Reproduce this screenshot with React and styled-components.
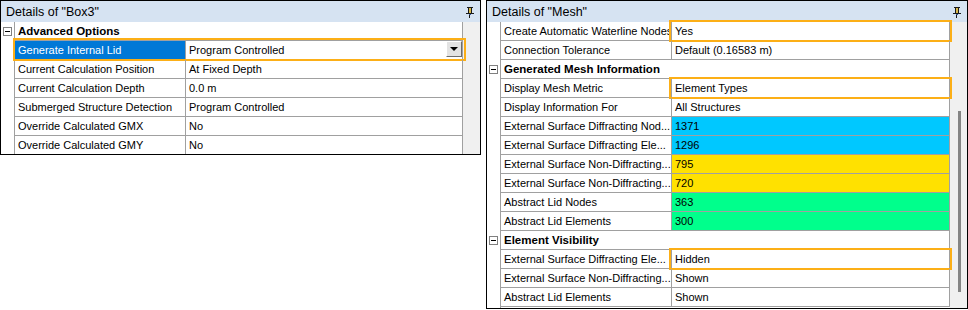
import React from 'react';
import styled, { createGlobalStyle } from 'styled-components';

const GlobalStyle = createGlobalStyle`
  body {
    margin: 0;
    background: #fff;
    font-family: "Liberation Sans", Arial, sans-serif;
    color: #000;
  }
`;

const FILLS = {
  blue: '#00c8ff',
  yellow: '#ffe100',
  green: '#00ff8c',
};

const ORANGE = '#fcaf17';

const Page = styled.div`
  display: flex;
  align-items: flex-start;
  gap: 5px;
`;

const Panel = styled.div`
  width: ${p => p.$w}px;
  height: ${p => p.$h}px;
  box-sizing: border-box;
  border: 1px solid #000;
  display: flex;
  flex-direction: column;
  overflow: hidden;
  background: #fff;
`;

const Header = styled.div`
  flex: none;
  height: 21px;
  box-sizing: border-box;
  padding: 1px 6px 0 5px;
  background: #d6e3f2;
  display: flex;
  align-items: center;
  justify-content: space-between;
  font-size: 12.5px;
`;

const Body = styled.div`
  flex: 1;
  min-height: 0;
  display: flex;
`;

const Rows = styled.div`
  flex: 1;
  display: flex;
  flex-direction: column;
`;

const Row = styled.div`
  flex: none;
  height: 19px;
  display: flex;
`;

const Filler = styled.div`
  flex: 1;
  display: flex;
`;

const Gutter = styled.div`
  flex: none;
  width: 14px;
  box-sizing: border-box;
  border-right: 1px solid #a0a0a0;
  display: flex;
  align-items: center;
  justify-content: center;
`;

const Minus = styled.div`
  width: 9px;
  height: 9px;
  box-sizing: border-box;
  border: 1px solid #808080;
  background: #fff;
  display: flex;
  align-items: center;
  justify-content: center;
  &::before {
    content: '';
    width: 5px;
    height: 1px;
    background: #000;
  }
`;

const Cells = styled.div`
  flex: none;
  display: flex;
  position: relative;
  height: 19px;
  box-sizing: border-box;
  border-bottom: 1px solid #a0a0a0;
  ${p => p.$box && `
    &::after {
      content: '';
      position: absolute;
      left: -2px;
      right: -3px;
      top: -3px;
      bottom: -2px;
      border: 2px solid ${ORANGE};
      pointer-events: none;
    }
  `}
`;

const cellText = `
  box-sizing: border-box;
  height: 18px;
  line-height: 18px;
  font-size: 11px;
  padding-left: 3px;
  white-space: nowrap;
  overflow: hidden;
  border-right: 1px solid #a0a0a0;
`;

const Prop = styled.div`
  ${cellText}
  width: 171px;
  background: ${p => (p.$selected ? '#0078d7' : 'transparent')};
  color: ${p => (p.$selected ? '#fff' : '#000')};
`;

const Value = styled.div`
  ${cellText}
  width: ${p => p.$w}px;
  position: relative;
  overflow: visible;
  display: flex;
  justify-content: space-between;
  background: ${p => FILLS[p.$fill] || 'transparent'};
  ${p => p.$box && `
    &::after {
      content: '';
      position: absolute;
      left: -3px;
      right: -3px;
      top: -2px;
      bottom: -2px;
      border: 2px solid ${ORANGE};
      pointer-events: none;
    }
  `}
`;

const Section = styled.div`
  ${cellText}
  width: ${p => p.$w}px;
  font-weight: bold;
  font-size: 11.5px;
`;

const DropButton = styled.div`
  flex: none;
  width: 16px;
  height: 16px;
  box-sizing: border-box;
  background: #e3e3e3;
  border-top: 1px solid #fff;
  border-left: 1px solid #fff;
  border-right: 1px solid #6d6d6d;
  border-bottom: 1px solid #6d6d6d;
  display: flex;
  align-items: center;
  justify-content: center;
  &::before {
    content: '';
    border-left: 4px solid transparent;
    border-right: 4px solid transparent;
    border-top: 4px solid #000;
  }
`;

const ScrollTrack = styled.div`
  flex: none;
  width: 17px;
  background: #f0f0f0;
  display: flex;
  justify-content: center;
  padding-top: ${p => p.$thumbTop || 0}px;
  box-sizing: border-box;
`;

const Thumb = styled.div`
  width: 3px;
  height: ${p => p.$h}px;
  background: #858585;
  margin-left: 1px;
`;

const Pin = () => (
  <svg width="8" height="11" viewBox="0 0 8 11">
    <rect x="1" y="0" width="6" height="1" fill="#1a1a1a" />
    <rect x="2" y="1" width="1" height="6" fill="#1a1a1a" />
    <rect x="3" y="1" width="2" height="6" fill="#d9b84a" />
    <rect x="5" y="1" width="1" height="6" fill="#1a1a1a" />
    <rect x="0" y="6" width="8" height="1" fill="#1a1a1a" />
    <rect x="3" y="7" width="2" height="1" fill="#3a5a9a" />
    <rect x="3" y="8" width="1" height="3" fill="#1a1a1a" />
  </svg>
);

const leftRows = [
  { section: 'Advanced Options' },
  { name: 'Generate Internal Lid', value: 'Program Controlled', selected: true, dropdown: true, box: 'row' },
  { name: 'Current Calculation Position', value: 'At Fixed Depth' },
  { name: 'Current Calculation Depth', value: '0.0 m' },
  { name: 'Submerged Structure Detection', value: 'Program Controlled' },
  { name: 'Override Calculated GMX', value: 'No' },
  { name: 'Override Calculated GMY', value: 'No' },
];

const rightRows = [
  { name: 'Create Automatic Waterline Nodes', value: 'Yes', box: 'value' },
  { name: 'Connection Tolerance', value: 'Default (0.16583 m)' },
  { section: 'Generated Mesh Information' },
  { name: 'Display Mesh Metric', value: 'Element Types', box: 'value' },
  { name: 'Display Information For', value: 'All Structures' },
  { name: 'External Surface Diffracting Nod...', value: '1371', fill: 'blue' },
  { name: 'External Surface Diffracting Ele...', value: '1296', fill: 'blue' },
  { name: 'External Surface Non-Diffracting...', value: '795', fill: 'yellow' },
  { name: 'External Surface Non-Diffracting...', value: '720', fill: 'yellow' },
  { name: 'Abstract Lid Nodes', value: '363', fill: 'green' },
  { name: 'Abstract Lid Elements', value: '300', fill: 'green' },
  { section: 'Element Visibility' },
  { name: 'External Surface Diffracting Ele...', value: 'Hidden', box: 'value' },
  { name: 'External Surface Non-Diffracting...', value: 'Shown' },
  { name: 'Abstract Lid Elements', value: 'Shown' },
];

const DetailsPanel = ({ title, rows, width, height, valueWidth, thumb }) => (
  <Panel $w={width} $h={height}>
    <Header>
      <span>Details of &quot;{title}&quot;</span>
      <Pin />
    </Header>
    <Body>
      <Rows>
        {rows.map((r, i) => (
          <Row key={i}>
            <Gutter>{r.section && <Minus />}</Gutter>
            {r.section ? (
              <Cells>
                <Section $w={171 + valueWidth}>{r.section}</Section>
              </Cells>
            ) : (
              <Cells $box={r.box === 'row'}>
                <Prop $selected={r.selected}>{r.name}</Prop>
                <Value $w={valueWidth} $fill={r.fill} $box={r.box === 'value'}>
                  <span>{r.value}</span>
                  {r.dropdown && <DropButton />}
                </Value>
              </Cells>
            )}
          </Row>
        ))}
        <Filler>
          <Gutter />
        </Filler>
      </Rows>
      <ScrollTrack $thumbTop={thumb ? thumb.top : 0}>
        {thumb && <Thumb $h={thumb.height} />}
      </ScrollTrack>
    </Body>
  </Panel>
);

export default function App() {
  return (
    <>
      <GlobalStyle />
      <Page>
        <DetailsPanel title="Box3" rows={leftRows} width={481} height={155} valueWidth={277} />
        <DetailsPanel
          title="Mesh"
          rows={rightRows}
          width={482}
          height={309}
          valueWidth={278}
          thumb={{ top: 89, height: 181 }}
        />
      </Page>
    </>
  );
}
